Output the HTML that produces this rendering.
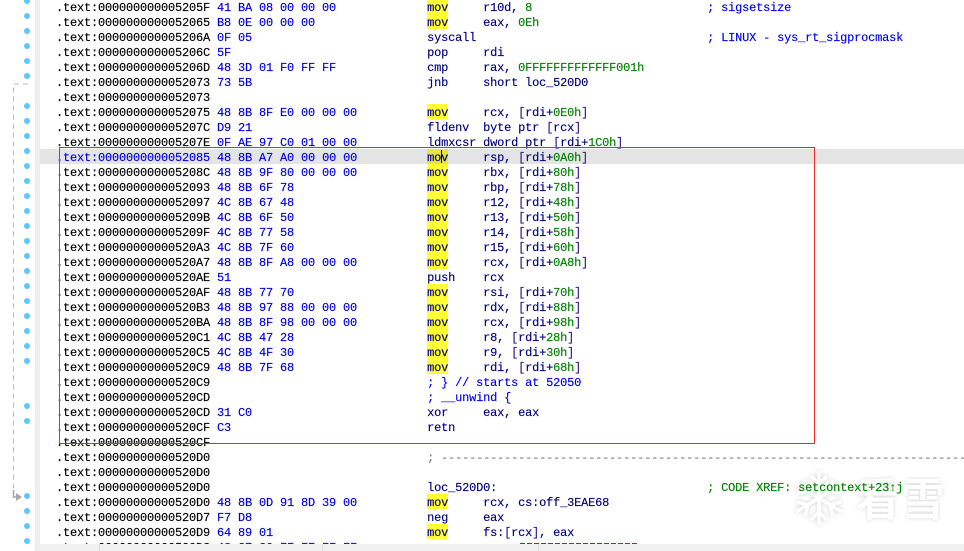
<!DOCTYPE html>
<html>
<head>
<meta charset="utf-8">
<style>
html,body{margin:0;padding:0;background:#fff}
#p{position:relative;width:964px;height:551px;overflow:hidden;background:#fff}
#strip{position:absolute;left:35px;top:0;width:5px;height:551px;background:#eeeeee}
#hl{position:absolute;left:40px;top:149px;width:924px;height:15px;background:#e4e4e4}
.y{position:absolute;left:427px;width:21px;height:15px;background:#ffff33}
#clip{position:absolute;left:0;top:0;width:964px;height:544px;overflow:hidden}
pre{position:absolute;left:56px;top:1px;margin:0;font:12px/15px "Liberation Mono",monospace;letter-spacing:-.2px;color:#000;white-space:pre;-webkit-text-stroke:.15px currentColor}
b{font-weight:normal;color:#0000e0}
i{font-style:normal;color:#000080}
u{text-decoration:none;color:#008000}
s{text-decoration:none;color:#3a2090}
em{font-style:normal;color:#0000f0}
q{quotes:none;color:#808080}
#bar{position:absolute;left:40px;top:544px;width:924px;height:7px;background:#f0f0f0}
.d{position:absolute;left:24px;width:6px;height:6px;border-radius:50%;background:#5cc8ff}
.t{position:absolute;top:544px;width:1px;height:7px;background:#dcdcdc}
#red{position:absolute;left:59px;top:147px;width:756px;height:297px;border:1px solid #f02828;box-sizing:border-box}
#cur{position:absolute;left:441px;top:150px;width:1px;height:13px;background:#000}
#wm{position:absolute;left:856px;top:468px;font:bold 44px/56px "Noto Sans CJK SC",sans-serif;color:#fff;text-shadow:0 0 4px rgba(0,0,0,.16);letter-spacing:1px;white-space:pre}
svg{position:absolute;left:0;top:0}
</style>
</head>
<body>
<div id="p">
<div id="strip"></div>
<div id="hl"></div>
<div class="y" style="top:-1px"></div>
<div class="y" style="top:14px"></div>
<div class="y" style="top:104px"></div>
<div class="y" style="top:149px;background:#e6e640"></div>
<div class="y" style="top:164px"></div>
<div class="y" style="top:179px"></div>
<div class="y" style="top:194px"></div>
<div class="y" style="top:209px"></div>
<div class="y" style="top:224px"></div>
<div class="y" style="top:239px"></div>
<div class="y" style="top:254px"></div>
<div class="y" style="top:284px"></div>
<div class="y" style="top:299px"></div>
<div class="y" style="top:314px"></div>
<div class="y" style="top:329px"></div>
<div class="y" style="top:344px"></div>
<div class="y" style="top:359px"></div>
<div class="y" style="top:494px"></div>
<div class="y" style="top:524px"></div>
<svg width="964" height="551" viewBox="0 0 964 551">
<g fill="none" stroke="#fff" stroke-width="3.5" style="filter:drop-shadow(0 0 2px rgba(0,0,0,.18))">
<path d="M819 471V525M796 484L842 512M842 484L796 512"/>
<path d="M811 476L819 484L827 476M811 520L819 512L827 520M797 494L808 491L805 480M841 494L830 491L833 480M797 502L808 505L805 516M841 502L830 505L833 516"/>
</g>
</svg>
<div id="wm">看雪</div>
<div id="clip">
<pre>.text:000000000005205F <b>41 BA 08 00 00 00</b>             <i>mov     r10d, </i><u>8</u>                         <em>; sigsetsize</em>
.text:0000000000052065 <b>B8 0E 00 00 00</b>                <i>mov     eax, </i><u>0Eh</u>
.text:000000000005206A <b>0F 05</b>                         <i>syscall</i>                                 <em>; LINUX - sys_rt_sigprocmask</em>
.text:000000000005206C <b>5F</b>                            <i>pop     rdi</i>
.text:000000000005206D <b>48 3D 01 F0 FF FF</b>             <i>cmp     rax, </i><u>0FFFFFFFFFFFFF001h</u>
.text:0000000000052073 <b>73 5B</b>                         <i>jnb     short loc_520D0</i>
.text:0000000000052073
.text:0000000000052075 <b>48 8B 8F E0 00 00 00</b>          <i>mov     rcx, </i><s>[</s><i>rdi+</i><u>0E0h</u><s>]</s>
.text:000000000005207C <b>D9 21</b>                         <i>fldenv  byte ptr </i><s>[</s><i>rcx</i><s>]</s>
.text:000000000005207E <b>0F AE 97 C0 01 00 00</b>          <i>ldmxcsr dword ptr </i><s>[</s><i>rdi+</i><u>1C0h</u><s>]</s>
<b>.text:0000000000052085</b> <b>48 8B A7 A0 00 00 00</b>          <i>mov     rsp, </i><s>[</s><i>rdi+</i><u>0A0h</u><s>]</s>
.text:000000000005208C <b>48 8B 9F 80 00 00 00</b>          <i>mov     rbx, </i><s>[</s><i>rdi+</i><u>80h</u><s>]</s>
.text:0000000000052093 <b>48 8B 6F 78</b>                   <i>mov     rbp, </i><s>[</s><i>rdi+</i><u>78h</u><s>]</s>
.text:0000000000052097 <b>4C 8B 67 48</b>                   <i>mov     r12, </i><s>[</s><i>rdi+</i><u>48h</u><s>]</s>
.text:000000000005209B <b>4C 8B 6F 50</b>                   <i>mov     r13, </i><s>[</s><i>rdi+</i><u>50h</u><s>]</s>
.text:000000000005209F <b>4C 8B 77 58</b>                   <i>mov     r14, </i><s>[</s><i>rdi+</i><u>58h</u><s>]</s>
.text:00000000000520A3 <b>4C 8B 7F 60</b>                   <i>mov     r15, </i><s>[</s><i>rdi+</i><u>60h</u><s>]</s>
.text:00000000000520A7 <b>48 8B 8F A8 00 00 00</b>          <i>mov     rcx, </i><s>[</s><i>rdi+</i><u>0A8h</u><s>]</s>
.text:00000000000520AE <b>51</b>                            <i>push    rcx</i>
.text:00000000000520AF <b>48 8B 77 70</b>                   <i>mov     rsi, </i><s>[</s><i>rdi+</i><u>70h</u><s>]</s>
.text:00000000000520B3 <b>48 8B 97 88 00 00 00</b>          <i>mov     rdx, </i><s>[</s><i>rdi+</i><u>88h</u><s>]</s>
.text:00000000000520BA <b>48 8B 8F 98 00 00 00</b>          <i>mov     rcx, </i><s>[</s><i>rdi+</i><u>98h</u><s>]</s>
.text:00000000000520C1 <b>4C 8B 47 28</b>                   <i>mov     r8, </i><s>[</s><i>rdi+</i><u>28h</u><s>]</s>
.text:00000000000520C5 <b>4C 8B 4F 30</b>                   <i>mov     r9, </i><s>[</s><i>rdi+</i><u>30h</u><s>]</s>
.text:00000000000520C9 <b>48 8B 7F 68</b>                   <i>mov     rdi, </i><s>[</s><i>rdi+</i><u>68h</u><s>]</s>
.text:00000000000520C9                               <em>; } // starts at 52050</em>
.text:00000000000520CD                               <em>; __unwind {</em>
.text:00000000000520CD <b>31 C0</b>                         <i>xor     eax, eax</i>
.text:00000000000520CF <b>C3</b>                            <i>retn</i>
.text:00000000000520CF
.text:00000000000520D0                               <q>; ---------------------------------------------------------------------------</q>
.text:00000000000520D0
.text:00000000000520D0                               <i>loc_520D0:</i>                              <u>; CODE XREF: setcontext+23↑j</u>
.text:00000000000520D0 <b>48 8B 0D 91 8D 39 00</b>          <i>mov     rcx, cs:off_3EAE68</i>
.text:00000000000520D7 <b>F7 D8</b>                         <i>neg     eax</i>
.text:00000000000520D9 <b>64 89 01</b>                      <i>mov     fs:</i><s>[</s><i>rcx</i><s>]</s><i>, eax</i>
.text:00000000000520DC <b>48 C7 C0 FF FF FF FF</b></pre>
<div style="position:absolute;left:520px;top:543px;width:119px;height:1px;background:repeating-linear-gradient(90deg,#008000 0 5px,transparent 5px 7px)"></div>
</div>
<div id="cur"></div>
<div id="red"></div>
<div class="d" style="top:-2px"></div>
<div class="d" style="top:13px"></div>
<div class="d" style="top:28px"></div>
<div class="d" style="top:43px"></div>
<div class="d" style="top:58px"></div>
<div class="d" style="top:73px"></div>
<div class="d" style="top:103px"></div>
<div class="d" style="top:118px"></div>
<div class="d" style="top:133px"></div>
<div class="d" style="top:148px"></div>
<div class="d" style="top:163px"></div>
<div class="d" style="top:178px"></div>
<div class="d" style="top:193px"></div>
<div class="d" style="top:208px"></div>
<div class="d" style="top:223px"></div>
<div class="d" style="top:238px"></div>
<div class="d" style="top:253px"></div>
<div class="d" style="top:268px"></div>
<div class="d" style="top:283px"></div>
<div class="d" style="top:298px"></div>
<div class="d" style="top:313px"></div>
<div class="d" style="top:328px"></div>
<div class="d" style="top:343px"></div>
<div class="d" style="top:358px"></div>
<div class="d" style="top:403px"></div>
<div class="d" style="top:418px"></div>
<div class="d" style="top:493px"></div>
<div class="d" style="top:508px"></div>
<div class="d" style="top:523px"></div>
<div class="d" style="top:538px"></div>
<svg width="964" height="551" viewBox="0 0 964 551">
<path d="M28 84H13.5V497" fill="none" stroke="#bdbdbd" stroke-width="1" stroke-dasharray="5 4"/>
<path d="M13.5 490V497H17" fill="none" stroke="#a8a8a8" stroke-width="1.5"/>
<path d="M16 493L22 497L16 501Z" fill="#a8a8a8"/>
</svg>
<div id="bar"></div>
<div class="t" style="left:99px"></div>
<div class="t" style="left:322px"></div>
<div class="t" style="left:538px"></div>
</div>
</body>
</html>
